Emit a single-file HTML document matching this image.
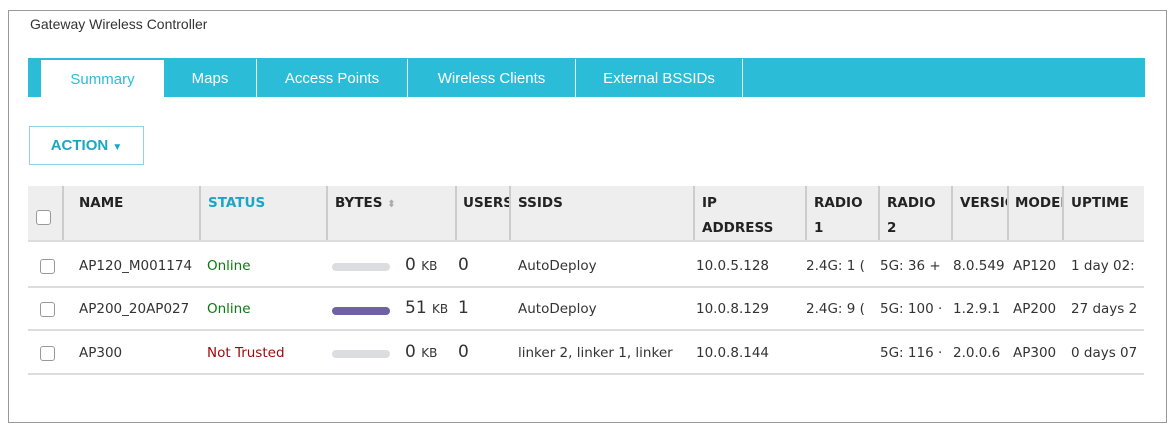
<!DOCTYPE html><html><head><style>
body{margin:0;width:1175px;height:432px;background:#fff;position:relative;overflow:hidden;font-family:"DejaVu Sans","Liberation Sans",sans-serif;color:#333}
.a{position:absolute;white-space:nowrap;overflow:hidden}
.frame{left:8px;top:10px;width:1157px;height:411px;border:1px solid #999}
.tabs{left:28px;top:58px;width:1117px;height:39px;background:#2bbcd8}
.tab{top:59px;height:39px;line-height:39px;color:#fff;font-family:"Liberation Sans",sans-serif;text-align:center;border-right:1px solid #e6f7fa;font-size:15px}
.hd{top:186px;height:54px;background:#eeeeee;left:28px;width:1116px;border-bottom:2px solid #ddd}
.vl{top:186px;width:2px;height:54px;background:#ccc}
.h{top:191px;font-weight:bold;font-size:13.5px;color:#222;line-height:25px}
.c{font-size:13.5px;color:#333;line-height:20px}
.line{left:28px;width:1116px;height:2px;background:#ddd}
.cb{width:13px;height:13px;border:1px solid #999;border-radius:3px;background:#fff}
.bar{width:58px;height:8px;border-radius:4px;background:#dcdde0}
</style></head><body>
<div class="a frame"></div>
<div class="a" style="left:30px;top:16px;font-size:14px;color:#333;font-family:'Liberation Sans',sans-serif">Gateway Wireless Controller</div>
<div class="a tabs"></div>
<div class="a tab" style="left:41px;top:60px;height:37px;width:123px;background:#fff;color:#2bbcd8;border:none;line-height:39px">Summary</div>
<div class="a tab" style="left:164px;width:92px">Maps</div>
<div class="a tab" style="left:257px;width:150px">Access Points</div>
<div class="a tab" style="left:408px;width:167px">Wireless Clients</div>
<div class="a tab" style="left:576px;width:166px">External BSSIDs</div>
<div class="a" style="left:29px;top:126px;width:113px;height:37px;border:1px solid #8fd3e3;color:#1aa6c4;font-weight:bold;font-size:15px;line-height:37px;text-align:center;font-family:'Liberation Sans',sans-serif">ACTION <span style="font-size:10px">▼</span></div>
<div class="a hd"></div>
<div class="a vl" style="left:62px"></div><div class="a vl" style="left:199px"></div><div class="a vl" style="left:326px"></div><div class="a vl" style="left:455px"></div><div class="a vl" style="left:509px"></div><div class="a vl" style="left:693px"></div><div class="a vl" style="left:805px"></div><div class="a vl" style="left:878px"></div><div class="a vl" style="left:951px"></div><div class="a vl" style="left:1007px"></div><div class="a vl" style="left:1062px"></div>
<div class="a cb" style="left:36px;top:210px"></div>
<div class="a h" style="left:79px">NAME</div>
<div class="a h" style="left:208px;color:#1aa6c4">STATUS</div>
<div class="a h" style="left:335px">BYTES <span style="color:#aaa;font-size:10px">⬍</span></div>
<div class="a h" style="left:463px;width:46px">USERS</div>
<div class="a h" style="left:518px">SSIDS</div>
<div class="a h" style="left:702px">IP<br>ADDRESS</div>
<div class="a h" style="left:814px">RADIO<br>1</div>
<div class="a h" style="left:887px">RADIO<br>2</div>
<div class="a h" style="left:960px;width:47px">VERSION</div>
<div class="a h" style="left:1015px;width:47px">MODEL</div>
<div class="a h" style="left:1071px;width:73px">UPTIME</div>

<div class="a line" style="top:286px"></div>
<div class="a line" style="top:329px"></div>
<div class="a line" style="top:373px"></div>

<!-- row1 -->
<div class="a cb" style="left:40px;top:259px"></div>
<div class="a c" style="left:79px;top:256px;width:125px">AP120_M001174</div>
<div class="a c" style="left:207px;top:256px;color:#0a7a10">Online</div>
<div class="a bar" style="left:332px;top:263px"></div>
<div class="a c" style="left:405px;top:255px;font-size:17px">0 <span style="font-size:12px">KB</span></div>
<div class="a c" style="left:458px;top:255px;font-size:17px">0</div>
<div class="a c" style="left:518px;top:256px">AutoDeploy</div>
<div class="a c" style="left:696px;top:256px">10.0.5.128</div>
<div class="a c" style="left:806px;top:256px;width:72px">2.4G: 1 (</div>
<div class="a c" style="left:880px;top:256px;width:71px">5G: 36 +</div>
<div class="a c" style="left:953px;top:256px;width:54px">8.0.549</div>
<div class="a c" style="left:1013px;top:256px;width:50px">AP120</div>
<div class="a c" style="left:1071px;top:256px;width:73px">1 day 02:</div>
<!-- row2 -->
<div class="a cb" style="left:40px;top:302px"></div>
<div class="a c" style="left:79px;top:299px;width:125px">AP200_20AP027</div>
<div class="a c" style="left:207px;top:299px;color:#0a7a10">Online</div>
<div class="a bar" style="left:332px;top:307px;background:#6f62a3"></div>
<div class="a c" style="left:405px;top:298px;font-size:17px">51 <span style="font-size:12px">KB</span></div>
<div class="a c" style="left:458px;top:298px;font-size:17px">1</div>
<div class="a c" style="left:518px;top:299px">AutoDeploy</div>
<div class="a c" style="left:696px;top:299px">10.0.8.129</div>
<div class="a c" style="left:806px;top:299px;width:72px">2.4G: 9 (</div>
<div class="a c" style="left:880px;top:299px;width:71px">5G: 100 ·</div>
<div class="a c" style="left:953px;top:299px;width:54px">1.2.9.1</div>
<div class="a c" style="left:1013px;top:299px;width:50px">AP200</div>
<div class="a c" style="left:1071px;top:299px;width:73px">27 days 2</div>
<!-- row3 -->
<div class="a cb" style="left:40px;top:346px"></div>
<div class="a c" style="left:79px;top:343px">AP300</div>
<div class="a c" style="left:207px;top:343px;color:#9a0a0a">Not Trusted</div>
<div class="a bar" style="left:332px;top:350px"></div>
<div class="a c" style="left:405px;top:342px;font-size:17px">0 <span style="font-size:12px">KB</span></div>
<div class="a c" style="left:458px;top:342px;font-size:17px">0</div>
<div class="a c" style="left:518px;top:343px;width:176px">linker 2, linker 1, linker</div>
<div class="a c" style="left:696px;top:343px">10.0.8.144</div>
<div class="a c" style="left:880px;top:343px;width:71px">5G: 116 ·</div>
<div class="a c" style="left:953px;top:343px;width:54px">2.0.0.6</div>
<div class="a c" style="left:1013px;top:343px;width:50px">AP300</div>
<div class="a c" style="left:1071px;top:343px;width:73px">0 days 07</div>
</body></html>
